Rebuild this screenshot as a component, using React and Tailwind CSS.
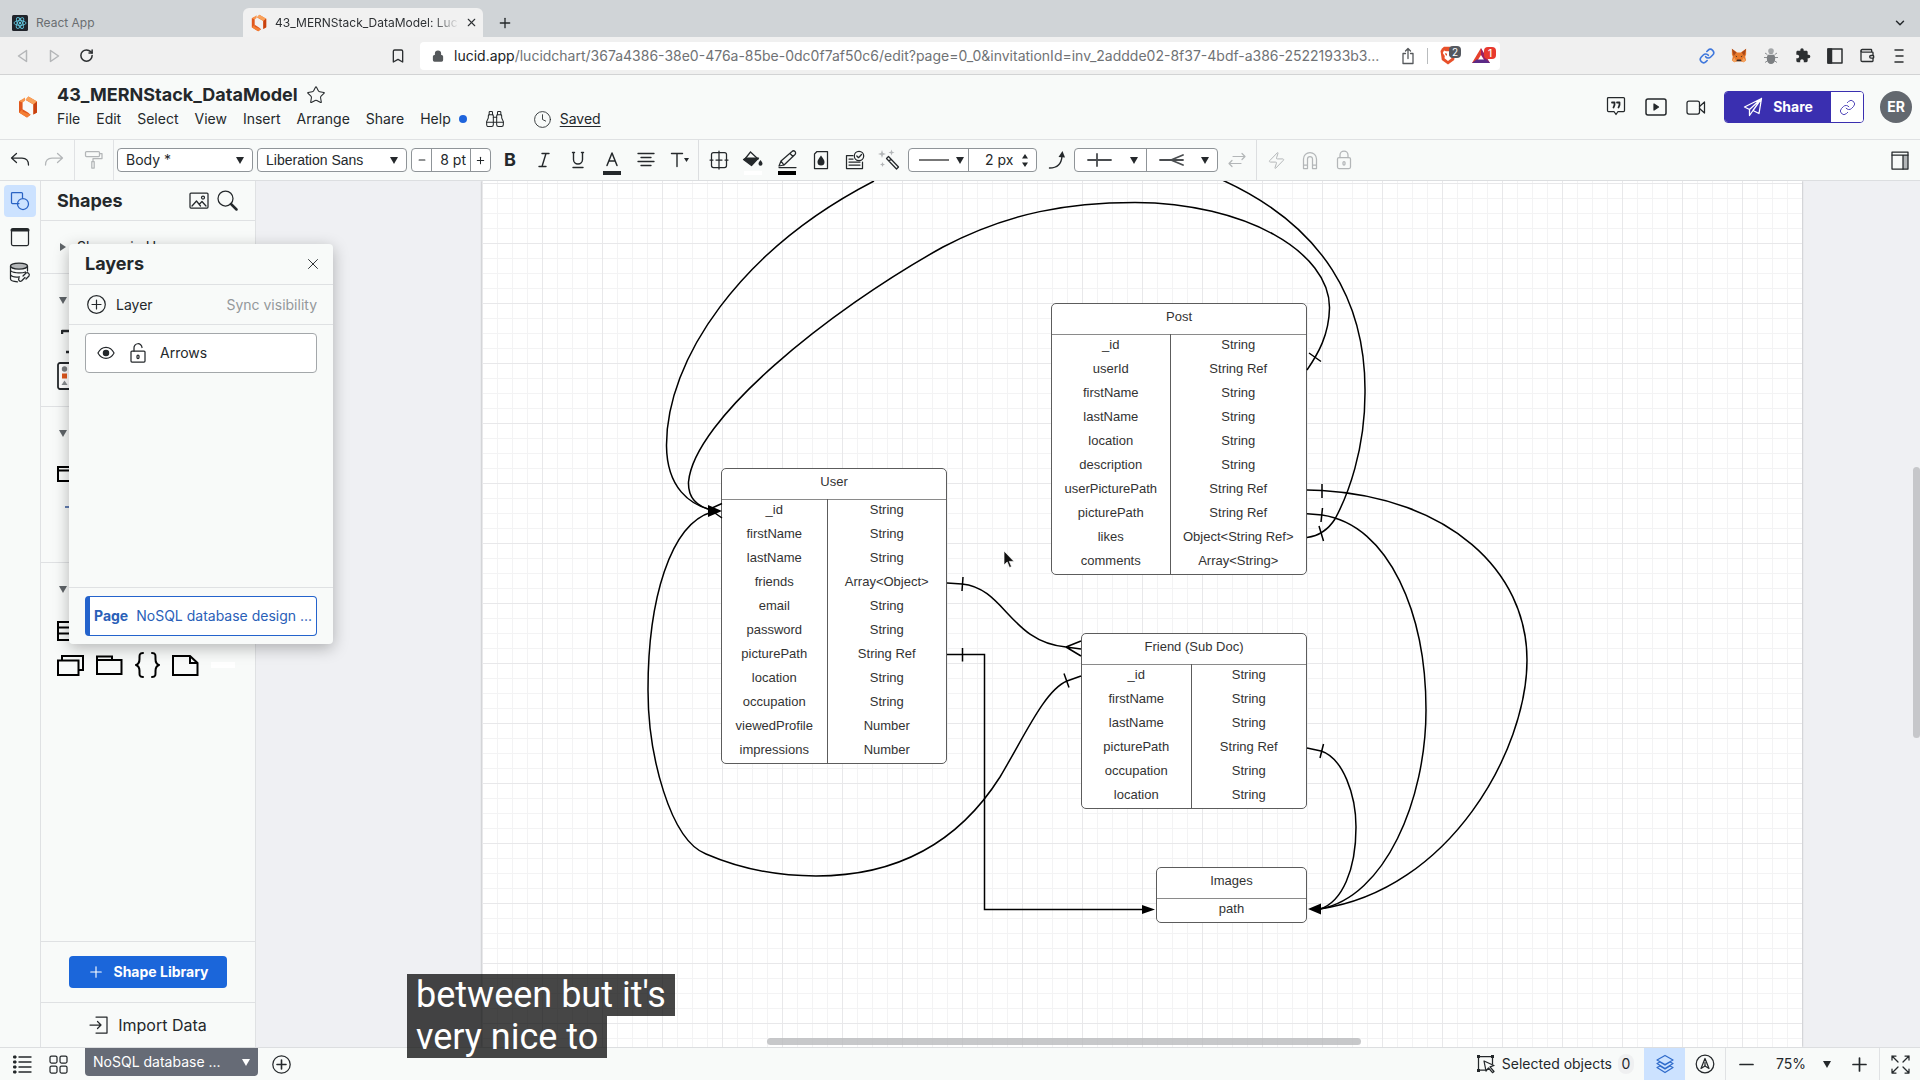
import React from "react";
import {
  Bookmark, RotateCw, Lock, Link, Bug, Wallet, ChevronDown, X, Plus,
  Star, Binoculars, Clock, Zap, Minus,
} from "lucide-react";
import { MdExtension } from "react-icons/md";

const INK = "#24282b";

function Svg({ w = 24, h = 24, box, className = "", children, sw = 1.25, fill = "none" }) {
  return (
    <svg width={w} height={h} viewBox={box || `0 0 ${w} ${h}`} fill={fill} stroke="currentColor" strokeWidth={sw} strokeLinecap="round" strokeLinejoin="round" className={className} aria-hidden="true">
      {children}
    </svg>
  );
}

function Caret({ className = "" }) {
  return (
    <svg width="8" height="7" viewBox="0 0 8 7" fill="currentColor" className={className} aria-hidden="true">
      <path d="M0 0h8L4 7z" />
    </svg>
  );
}

function LucidLogo({ w, h }) {
  return (
    <svg width={w} height={h} viewBox="0 0 20 22" aria-hidden="true">
      <path d="M1 5.2 4.6 3.4v9.8L10 16.6l2.6 2.2L9 21.4 1 16.4z" fill="#e0571d" />
      <path d="M1 5.2 7 1.4 7 4.8 4.6 6.6z" fill="#f7934b" />
      <path d="M10.4.6 19 5.6v10.8l-3.6 2V8.4L7.6 4z" fill="#ee6c26" />
      <path d="M10.4.6 19 5.6l-3.6 2.8L7.6 3.4z" fill="#f9a25b" />
      <path d="M4.6 13.2v2.4L12.6 18.8 9 21.4 1 16.4z" fill="#f47f35" />
      <path d="M15.4 8.4 19 5.6v10.8l-3.6 2z" fill="#c8410f" />
    </svg>
  );
}

function ReactLogo() {
  return (
    <svg width="16" height="16" viewBox="0 0 16 16" aria-hidden="true">
      <rect width="16" height="16" rx="1.5" fill="#20232a" />
      <g fill="none" stroke="#61c4dc" strokeWidth="0.9">
        <ellipse cx="8" cy="8" rx="6" ry="2.4" />
        <ellipse cx="8" cy="8" rx="6" ry="2.4" transform="rotate(60 8 8)" />
        <ellipse cx="8" cy="8" rx="6" ry="2.4" transform="rotate(120 8 8)" />
      </g>
      <circle cx="8" cy="8" r="1.2" fill="#61c4dc" />
    </svg>
  );
}

function TabStrip() {
  return (
    <div className="flex h-[37px] items-end bg-[#d0d4d7] pl-3 pr-3">
      <button className="flex h-[29px] w-[231px] items-center gap-2 text-xs text-[#6a6e71]">
        <ReactLogo />
        React App
      </button>
      <div className="flex h-[29px] w-[240px] items-center rounded-t-md bg-[#f1f1f1] pl-2 pr-1 text-[#2e3134]">
        <LucidLogo w={16} h={18} />
        <span className="ml-2 mr-1 flex-1 whitespace-nowrap text-xs [mask-image:linear-gradient(to_right,black_86%,transparent)]">
          43_MERNStack_DataModel: Luc
        </span>
        <button aria-label="Close tab" className="flex w-4 justify-center"><X size={13} strokeWidth={2} /></button>
      </div>
      <button aria-label="New tab" className="ml-[14px] flex h-[29px] w-4 items-center justify-center"><Plus size={16} strokeWidth={2} /></button>
      <button aria-label="Search tabs" className="ml-auto flex h-[29px] w-4 items-center justify-center"><ChevronDown size={14} strokeWidth={2.5} /></button>
    </div>
  );
}

function Fox() {
  return (
    <svg width="18" height="17" viewBox="0 0 18 17" aria-hidden="true">
      <path d="M1 1l6 4h4l6-4v6l-1 3 1 4-3 2-3-1H7l-3 1-3-2 1-4-1-3z" fill="#e8792b" />
      <path d="M1 1l5 4-3 4zM17 1l-5 4 3 4z" fill="#a8481a" />
      <path d="M7 13h4l1 2H6z" fill="#3a2a22" />
      <path d="M5 8.5l2 1-1 1zM13 8.5l-2 1 1 1z" fill="#3a2a22" />
      <path d="M1 14l3-3 2 4-2 1zM17 14l-3-3-2 4 2 1z" fill="#f3a25e" />
    </svg>
  );
}

function Beetle() {
  return (
    <svg width="14" height="18" viewBox="0 0 14 18" aria-hidden="true">
      <path d="M1 6l3 2M13 6l-3 2M0 10.500h4M14 10.500h-4M1 15.500l3-2M13 15.500l-3-2" stroke="#8b8e91" fill="none" />
      <ellipse cx="7" cy="11.500" rx="4.200" ry="5.500" fill="#7c7f82" />
      <circle cx="7" cy="4" r="2.800" fill="#a4a7a9" />
      <path d="M3 7.500h8" stroke="#d0d2d3" />
    </svg>
  );
}

function AddressBar() {
  return (
    <div className="flex h-[38px] items-center border-b border-[#d2d3d4] bg-[#f0f0f0] pr-[13px] text-[#2c2f31]">
      <div className="flex w-[420px] items-center">
        <button aria-label="Back" className="ml-4 flex w-3 justify-center text-[#b4b6b8]"><Svg w={11} h={14} sw={1.5}><path d="M9.500 1.500v11L1.500 7z" /></Svg></button>
        <button aria-label="Forward" className="ml-5 flex w-3 justify-center text-[#b4b6b8]"><Svg w={11} h={14} sw={1.5}><path d="M1.500 1.500v11l8-5.500z" /></Svg></button>
        <button aria-label="Reload" className="ml-[18px] flex w-4 justify-center"><RotateCw size={15} strokeWidth={2.400} /></button>
        <button aria-label="Bookmark" className="ml-auto mr-[14px] flex w-4 justify-center"><Bookmark size={16} strokeWidth={2} /></button>
      </div>
      <div className="flex h-7 min-w-0 flex-[0_1_1080px] items-center rounded bg-white pl-3">
        <Lock size={12} strokeWidth={2.500} fill="#55585b" className="text-[#55585b]" />
        <a href="#address" className="ml-[10px] flex-1 whitespace-nowrap text-sm text-[#6f7275]">
          <span className="text-[#202326]">lucid.app</span>/lucidchart/367a4386-38e0-476a-85be-0dc0f7af50c6/edit?page=0_0&amp;invitationId=inv_2addde02-8f37-4bdf-a386-25221933b3...
        </a>
        <button aria-label="Share page" className="ml-3 flex w-4 justify-center text-[#55585b]">
          <Svg w={14} h={18} sw={1.3}><path d="M4.500 6.500H2v10h10v-10H9.500M7 11.500V1.500M4.500 4 7 1.500 9.500 4" /></Svg>
        </button>
        <span className="mx-[11px] h-4 w-px bg-[#b9bcbe]" />
        <button aria-label="Shields" className="relative flex w-6 items-center">
          <svg width="18" height="19" viewBox="0 0 18 19" aria-hidden="true">
            <path d="M3 2.500 5 .8h8l2 1.700L16.500 5l-1.300 9L9 18.500 2.800 14 1.500 5z" fill="#e8502a" />
            <path d="M5 4.500l2 .8h4l2-.8 1.200 2.500-2 3 .3 2.200L9 15l-3.500-2.800.3-2.200-2-3z" fill="#fff" />
            <path d="M6 7l2 .8v2L6.500 9zM12 7l-2 .8v2l1.500-.8z" fill="#e8502a" />
          </svg>
          <span className="absolute left-2.5 top-0 flex h-3 w-3 items-center justify-center rounded bg-[#54585f] text-[10px] leading-none text-white">2</span>
        </button>
        <button aria-label="Rewards" className="relative ml-[9px] flex w-7 items-center">
          <svg width="18" height="17" viewBox="0 0 18 17" aria-hidden="true">
            <path d="M9 1 0 16h4l5-8z" fill="#e6402c" />
            <path d="M9 1l9 15h-4L9 8z" fill="#9a1f63" />
            <path d="M0 16h18l-4-3.500H4.500z" fill="#5b2a86" />
          </svg>
          <span className="absolute left-3 top-0 flex h-3 w-3 items-center justify-center rounded bg-[#e8392e] text-[10px] font-medium leading-none text-white">1</span>
        </button>
      </div>
      <div className="ml-auto flex items-center gap-4">
        <button aria-label="Copy link" className="flex w-4 justify-center text-[#3f77dc]"><Link size={16} strokeWidth={2.400} /></button>
        <button aria-label="Wallet extension" className="flex w-4 justify-center"><Fox /></button>
        <button aria-label="Debugger" className="flex w-4 justify-center"><Beetle /></button>
        <button aria-label="Extensions" className="flex w-4 justify-center"><MdExtension size={17} /></button>
        <button aria-label="Sidebar" className="flex w-4 justify-center"><Svg w={16} h={16} sw={1.500}><rect x="1" y="1" width="14" height="14" /><path d="M1 1h3.500v14H1z" fill="currentColor" /></Svg></button>
        <button aria-label="Wallet" className="flex w-4 justify-center"><Wallet size={17} strokeWidth={2} /></button>
        <button aria-label="Menu" className="flex w-4 justify-center"><Svg w={10} h={14} sw={1.500}><path d="M1 1h8M2 7h7M1 13h8" /></Svg></button>
      </div>
    </div>
  );
}

const menus = ["File", "Edit", "Select", "View", "Insert", "Arrange", "Share", "Help"];

function Header() {
  return (
    <header className="flex h-[65px] items-center border-b border-[#dfe1e3] bg-[#f8faf9] pb-0.5">
      <a href="#home" aria-label="Home" className="flex w-[57px] justify-center pr-px pt-0.5"><LucidLogo w={20} h={22} /></a>
      <div className="flex flex-col gap-0.5">
        <div className="flex items-center gap-2">
          <h1 className="text-lg font-bold leading-6">43_MERNStack_DataModel</h1>
          <button aria-label="Favorite"><Star size={20} strokeWidth={1.250} /></button>
        </div>
        <nav className="flex h-5 items-center gap-4 text-sm">
          {menus.map((m) => (
            <button key={m}>{m}</button>
          ))}
          <span className="-ml-2 h-2 w-2 rounded-full bg-[#1e64dc]" />
          <button aria-label="Find" className="ml-0.5 flex w-5 justify-center"><Binoculars size={20} strokeWidth={1.250} /></button>
          <button className="ml-3 flex items-center gap-2"><Clock size={19} strokeWidth={1.100} /><span className="underline underline-offset-2">Saved</span></button>
        </nav>
      </div>
      <div className="ml-auto flex items-center pr-2 pt-0.5">
        <button aria-label="Comments" className="flex w-10 justify-center">
          <Svg w={20} h={22}><path d="M2.500 1.500h15a1 1 0 0 1 1 1v12a1 1 0 0 1-1 1H12l-2 3-2-3H2.500a1 1 0 0 1-1-1v-12a1 1 0 0 1 1-1z" /><path d="M6 6.500h2.500v2.500L7.500 11.500M11 6.500h2.500v2.500l-1 2.500" strokeWidth="1.800" /></Svg>
        </button>
        <button aria-label="Present" className="flex w-10 justify-center">
          <Svg w={22} h={18}><rect x="1" y="1" width="20" height="16" rx="2" strokeWidth="1.500" /><path d="M9 6v6l4.500-3z" fill="currentColor" /></Svg>
        </button>
        <button aria-label="Video call" className="flex w-10 justify-center"><Svg w={20} h={15}><rect x="1" y="1" width="12.500" height="13" rx="2" /><path d="M13.500 6.500 18.500 2v11l-5-4.500" /></Svg></button>
        <div className="ml-2 flex h-8 overflow-hidden rounded border border-[#3a2fb0]">
          <button className="flex w-[106px] items-center justify-center gap-2.5 bg-[#3a2fb0] text-sm font-bold text-white">
            <Svg w={20} h={20} sw={1.3}><path d="M18.500 1.500 1.500 10l5 2.500zM18.500 1.500 16 16.500l-6-3zM6.500 12.500v6L10 13.500M18.500 1.500 10 13.500" /></Svg>
            Share
          </button>
          <button aria-label="Share link" className="flex w-8 items-center justify-center bg-white text-[#3a2fb0]"><Link size={17} strokeWidth={1.250} /></button>
        </div>
        <button className="ml-4 flex h-8 w-8 items-center justify-center rounded-full bg-[#63686f] text-sm font-bold text-white">ER</button>
      </div>
    </header>
  );
}

function Tool({ label, children, dim }) {
  return (
    <button aria-label={label} className={"flex h-10 w-[34px] shrink-0 items-center justify-center " + (dim ? "text-[#b3b6b8]" : "text-[#24282b]")}>
      {children}
    </button>
  );
}

function Pick({ label, value, className }) {
  return (
    <div className={"relative h-6 rounded border border-[#8f9498] bg-white " + className}>
      <select aria-label={label} className="block h-[22px] w-full appearance-none bg-transparent pl-2 text-sm leading-[22px] outline-none">
        <option>{value}</option>
      </select>
      <Caret className="pointer-events-none absolute right-2 top-2" />
    </div>
  );
}

function Toolbar() {
  return (
    <div className="flex h-[41px] items-center border-b border-[#dcdee0] bg-[#f8faf9]">
      <div className="flex h-full items-center border-r border-[#e0e2e4] px-[3px]">
        <Tool label="Undo"><Svg w={20} h={16}><path d="M6.500 1.500 1.500 6l5 4.500M1.500 6H12c4 0 6.500 2.500 6.500 7" /></Svg></Tool>
        <Tool label="Redo" dim><Svg w={20} h={16}><path d="m13.500 1.500 5 4.500-5 4.500M18.500 6H8c-4 0-6.500 2.500-6.500 7" /></Svg></Tool>
      </div>
      <div className="flex h-full items-center border-r border-[#e0e2e4] px-0.5">
        <Tool label="Format painter" dim><Svg w={20} h={20}><rect x="1.500" y="1.500" width="14" height="5" rx="1" /><path d="M15.500 3.500h2.500v5H9v3M7.800 11.500h2.400v6.500H7.800z" /></Svg></Tool>
      </div>
      <Pick label="Text style" value="Body *" className="ml-[3px] w-[136px]" />
      <Pick label="Font" value="Liberation Sans" className="ml-1 w-[150px] font-['Liberation_Sans',sans-serif]" />
      <div className="ml-1 mr-[2px] flex h-6 w-20 items-stretch overflow-hidden rounded border border-[#8f9498] bg-white">
        <button aria-label="Smaller text" className="flex w-5 items-center justify-center border-r border-[#8f9498]"><Minus size={10} strokeWidth={2.500} /></button>
        <input aria-label="Text size" defaultValue="8 pt" className="w-0 flex-1 bg-transparent pr-1 text-right text-sm outline-none" />
        <button aria-label="Larger text" className="flex w-5 items-center justify-center border-l border-[#8f9498]"><Plus size={11} strokeWidth={2.200} /></button>
      </div>
      <Tool label="Bold"><span className="text-lg font-bold leading-none">B</span></Tool>
      <Tool label="Italic"><Svg w={14} h={16} sw={1.400}><path d="M5 1.500h7M2 14.500h7M9 1.500l-4 13" /></Svg></Tool>
      <Tool label="Underline"><Svg w={14} h={18} sw={1.400}><path d="M2.500 1.500v7a4.500 4.500 0 0 0 9 0v-7M2 16.500h10M1.500 1.500h2M10.500 1.500h2" /></Svg></Tool>
      <Tool label="Text color"><Svg w={20} h={30} sw={1.500}><path d="M5 20.500 10 8l5 12.500M6.800 16h6.400" /><path d="M1 26h18v4H1z" fill="currentColor" stroke="none" /></Svg></Tool>
      <Tool label="Align"><Svg w={18} h={16} sw={1.300}><path d="M1 1.500h16M4 5.500h10M1 9.500h16M4 13.500h10" /></Svg></Tool>
      <Tool label="Text options"><Svg w={20} h={16} sw={1.400}><path d="M1.500 1.500h11M7 1.500v13" /><path d="M14 6h5l-2.500 4z" fill="currentColor" stroke="none" /></Svg></Tool>
      <div className="ml-px mr-[3px] h-full w-px bg-[#dcdee0]" />
      <Tool label="Container"><Svg w={20} h={20}><rect x="2.500" y="2.500" width="15" height="15" rx="2" /><path d="M10 1v18M1 10h3M16 10h3M7 10h6" /></Svg></Tool>
      <Tool label="Fill"><Svg w={22} h={30}><g transform="translate(0 2)"><path d="m8.500 5-6 7.500M8.500 5l7.500 7" /><path d="M1.500 12.500 4 11h12.500L9.500 18.500z" fill="currentColor" /><path d="M18.500 13c1.500 2 2 3 2 3.700a2 2 0 0 1-4 0c0-.7.500-1.700 2-3.700z" fill="currentColor" stroke="none" /></g><path d="M2 26h18v4H2z" fill="#fff" stroke="none" /></Svg></Tool>
      <Tool label="Line color"><Svg w={20} h={30}><path d="m2 17 2-5L15 2.500a2 2 0 0 1 3 3L7 16zM4 12l3 4M13 4.500l3 3M2 18.500h17" transform="translate(0 4)" /><path d="M1 26h18v4H1z" fill="#000" stroke="none" /></Svg></Tool>
      <Tool label="Opacity"><Svg w={16} h={20}><path d="M4 1.500h10.500v17h-13V4z" /><path d="M8 5.500c2.500 3.500 3.500 5 3.500 6.500a3.500 3.500 0 0 1-7 0c0-1.500 1-3 3.500-6.500z" fill="currentColor" stroke="none" /></Svg></Tool>
      <Tool label="Conditional formatting"><Svg w={20} h={20}><path d="M8 5.500H1.500v13h16V12" /><circle cx="14" cy="6" r="4.700" /><path d="m11.800 6 1.700 1.700L16.500 4.500M4 9h4M4 12h11M4 15h11" /></Svg></Tool>
      <Tool label="Magic styling"><Svg w={24} h={22}><path d="m9.500 9.500 2-2 10 10.500-2 2zM12 12l2-2" /><path d="M5 1 6 4 9 5 6 6 5 9 4 6 1 5 4 4zM14.500.5l.8 2.200 2.200.8-2.200.8-.8 2.200-.8-2.200-2.200-.8 2.200-.8zM5.500 13l.7 1.800 1.800.7-1.800.7-.7 1.800-.7-1.800-1.800-.7 1.800-.7z" fill="#b3b6b8" stroke="none" /></Svg></Tool>
      <div className="ml-[2px] mr-[3px] flex h-6 w-[129px] items-stretch rounded border border-[#8f9498] bg-white text-sm">
        <button aria-label="Line style" className="flex w-[60px] items-center justify-between border-r border-[#8f9498] pl-2.5 pr-1"><span className="h-0.5 w-[30px] bg-[#777]" /><Caret /></button>
        <div className="flex flex-1 items-center justify-between pl-4 pr-2">
          <span>2 px</span>
          <svg width="6" height="13" viewBox="0 0 6 13" fill={INK} aria-hidden="true"><path d="M0 4.500 3 0l3 4.500zM0 8.500h6L3 13z" /></svg>
        </div>
      </div>
      <Tool label="Curved line"><Svg w={18} h={20} sw={1.400}><path d="M1.500 18C9 18 13.500 14 14 6" /><path d="m10.500 7 4-6 2.500 6.500z" fill="currentColor" stroke="none" /></Svg></Tool>
      <div className="mr-[2px] flex h-6 w-36 items-stretch rounded border border-[#8f9498] bg-white">
        <button aria-label="Line start" className="flex flex-1 items-center justify-between border-r border-[#8f9498] pl-3 pr-2 text-[#4a4d50]"><Svg w={25} h={14} sw={1.800}><path d="M1 7h23M10 1v12" /></Svg><Caret className="text-[#24282b]" /></button>
        <button aria-label="Line end" className="flex flex-1 items-center justify-between pl-3 pr-2 text-[#4a4d50]"><Svg w={25} h={14} sw={1.800}><path d="M1 7h23M12 7l12-5M12 7l12 5" /></Svg><Caret className="text-[#24282b]" /></button>
      </div>
      <Tool label="Swap ends" dim><Svg w={18} h={16} sw={1.200}><path d="M5 4.500h12L14 1.500M17 4.500l-3 3M13 11.500H1l3-3M1 11.500l3 3" /></Svg></Tool>
      <div className="ml-[2px] mr-[2px] h-full w-px bg-[#dcdee0]" />
      <Tool label="Actions" dim><Zap size={19} strokeWidth={1.250} /></Tool>
      <Tool label="Snap" dim><Svg w={16} h={19}><path d="M1.500 17.500V8a6.500 6.500 0 0 1 13 0v9.500h-4V8a2.500 2.500 0 0 0-5 0v9.500zM1.500 14h4M10.500 14h4" /></Svg></Tool>
      <Tool label="Lock" dim><Svg w={16} h={20}><rect x="1.500" y="7.500" width="13" height="11" rx="1.500" /><path d="M4 7.500V5a4 4 0 0 1 8 0v2.500" /><rect x="7" y="11.500" width="2" height="3.500" rx="1" /></Svg></Tool>
      <div className="ml-auto pr-[3px]">
        <Tool label="Toggle side panel"><Svg w={18} h={19}><rect x="12" y="4" width="5" height="14" fill="#b3b6b8" stroke="none" /><rect x="1" y="1" width="16" height="17" /><path d="M1 4h16M12 4v14" /></Svg></Tool>
      </div>
    </div>
  );
}

function Rail() {
  return (
    <div className="flex w-[41px] shrink-0 flex-col items-center gap-1 border-r border-[#dfe1e3] bg-[#f8faf9] pt-1">
      <button aria-label="Shapes" className="flex h-8 w-8 items-center justify-center rounded bg-[#cce2ff] text-[#2a63c4]">
        <Svg w={20} h={20}><path d="M9 12.500H2.500a1 1 0 0 1-1-1v-9a1 1 0 0 1 1-1h9a1 1 0 0 1 1 1V7" /><circle cx="13" cy="13" r="5.500" /></Svg>
      </button>
      <button aria-label="Containers" className="flex h-8 w-8 items-center justify-center"><Svg w={20} h={20}><rect x="1.500" y="1.500" width="17" height="17" rx="1.500" /><path d="M2 3h16" strokeWidth="3" /></Svg></button>
      <button aria-label="Linked data" className="flex h-8 w-8 items-center justify-center">
        <Svg w={22} h={22}><ellipse cx="10" cy="4" rx="8.500" ry="3" fill="#b3b6b8" /><path d="M1.500 4v13c0 1.500 3 2.500 7 2.800M18.500 4v5M1.500 8.500c1 2 10 3.500 15 1.500M1.500 12.800c1 1.500 5 2.500 9 2M14 14l3-3a2.200 2.200 0 0 1 3 3l-3 3M16 15.500l-3.500 3.500a2 2 0 0 1-2.500-3" /></Svg>
      </button>
    </div>
  );
}

function Fold({ open = true }) {
  return (
    <button aria-label="Toggle section" className="flex h-4 w-3 items-center text-[#5f6468]">
      {open ? <Caret /> : <svg width="7" height="8" viewBox="0 0 7 8" fill="currentColor" aria-hidden="true"><path d="M1 0v8l6-4z" /></svg>}
    </button>
  );
}

function ShapesPanel() {
  return (
    <aside className="flex w-[215px] shrink-0 flex-col border-r border-[#dfe1e3] bg-[#f8faf9]">
      <div className="flex h-10 items-center border-b border-[#dfe1e3] px-4">
        <h2 className="flex-1 text-lg font-bold">Shapes</h2>
        <button aria-label="Search images" className="mr-2"><Svg w={20} h={17}><rect x="1" y="1" width="18" height="15" rx="1" /><circle cx="14" cy="5.500" r="1.500" /><path d="m3 14 4.500-5 4 5M10.500 12l2.500-2.500 4 4.500" /></Svg></button>
        <button aria-label="Search shapes" className="mr-px"><Svg w={21} h={21}><circle cx="8.500" cy="8.500" r="7.500" /><path d="m14 14 5.500 5.500" strokeWidth="2.500" /></Svg></button>
      </div>
      <section className="flex h-[53px] items-center gap-1.5 border-b border-[#dfe1e3] pl-[18px] text-sm"><Fold open={false} />Shapes in Use</section>
      <section className="flex h-[133px] flex-col border-b border-[#dfe1e3] pl-4 pt-[18px]">
        <div className="pl-0.5"><Fold /></div>
        <div className="mt-5 flex pl-1"><Svg w={22} h={26} sw={2.500}><path d="M1 6V3h19v3M10.500 3v21M5 24h11" strokeLinecap="butt" /></Svg></div>
        <div className="mt-2 flex"><Svg w={30} h={28} sw={1.800}><rect x="1" y="1" width="28" height="26" rx="2" fill="#fff" /><circle cx="7.500" cy="7" r="2.700" fill="#777b7e" stroke="none" /><path d="M5 11.500h5v5H5z" fill="#e0571d" stroke="none" /><path d="m7.500 18.500 3 4.500h-6z" fill="#8a8e91" stroke="none" /></Svg></div>
      </section>
      <section className="flex h-[156px] flex-col border-b border-[#dfe1e3] pl-4 pt-[18px]">
        <div className="pl-0.5"><Fold /></div>
        <div className="mt-[25px] flex text-black"><Svg w={26} h={16} sw={2}><path d="M1 1h24v14H1zM1 4.500h24" strokeLinejoin="miter" /></Svg></div>
        <div className="mt-6 flex pl-2 text-[#31549a]"><Svg w={18} h={2} sw={1.500}><path d="M0 1h18" /></Svg></div>
      </section>
      <section className="flex flex-1 flex-col pl-4 pt-[18px] text-black">
        <div className="pl-0.5"><Fold /></div>
        <div className="mt-6 flex"><Svg w={26} h={20} sw={2}><path d="M1 1h24v18H1zM1 6.500h24M1 12.500h24" strokeLinejoin="miter" /></Svg></div>
        <div className="mt-2.5 flex h-7 items-center gap-3">
          <Svg w={27} h={21} sw={2}><path d="M5 4.500V1h21v14h-4M1 5.500h20.500V20H1z" strokeLinejoin="miter" /></Svg>
          <Svg w={27} h={20} sw={2}><path d="M1 19V1.500h15V5h9.500v14zM1 5h15" strokeLinejoin="miter" /></Svg>
          <Svg w={25} h={26} sw={2}><path d="M8 1C4 1 4.500 3.500 4.500 7S4 12 1 13c3 1 3.500 2.500 3.500 6S4 25 8 25M17 1c4 0 3.500 2.500 3.500 6s.500 5 3.500 6c-3 1-3.500 2.500-3.500 6s.500 6-3.500 6" /></Svg>
          <Svg w={27} h={21} sw={2}><path d="M1 1h17l7.500 7v12H1zM18 1v7h7.500" strokeLinejoin="miter" /></Svg>
          <span className="h-1.5 w-6 bg-white" />
        </div>
      </section>
      <div className="flex h-[61px] items-center justify-center border-t border-[#dfe1e3]">
        <button className="flex h-8 w-[158px] items-center justify-center gap-2 rounded bg-[#1b66da] text-sm font-bold text-white"><Plus size={18} strokeWidth={1.500} />Shape Library</button>
      </div>
      <button className="flex h-[45px] items-center justify-center gap-2.5 border-t border-[#dfe1e3] text-base">
        <Svg w={19} h={18}><path d="M7 1h11v16H7M1 9h11M8.500 5.500 12 9l-3.500 3.500" /></Svg>Import Data
      </button>
    </aside>
  );
}

function LayersPanel() {
  return (
    <aside className="absolute left-[69px] top-[63px] z-10 flex h-[400px] w-[264px] flex-col rounded bg-[#f8faf9] shadow-[0_4px_16px_rgba(0,0,0,0.28)]">
      <div className="flex h-[41px] items-center justify-between border-b border-[#dfe1e3] pl-4 pr-[11px]">
        <h2 className="text-lg font-bold">Layers</h2>
        <button aria-label="Close layers"><X size={18} strokeWidth={1.250} /></button>
      </div>
      <div className="flex h-10 items-center justify-between border-b border-[#dfe1e3] px-4 text-sm">
        <button className="flex items-center gap-2.5 pl-0.5"><Svg w={19} h={19} sw={1.200}><circle cx="9.500" cy="9.500" r="8.800" /><path d="M5 9.500h9M9.500 5v9" /></Svg>Layer</button>
        <button className="text-[#94989b]">Sync visibility</button>
      </div>
      <div className="flex-1 px-4 pt-2">
        <div className="flex h-10 items-center rounded border border-[#a3a7aa] bg-white pl-[11px] text-sm">
          <button aria-label="Hide layer" className="flex w-[18px] justify-center"><Svg w={19} h={14}><path d="M1 7c4-8 13-8 17 0-4 7.500-13 7.500-17 0z" /><circle cx="9.500" cy="7" r="2.800" fill="currentColor" /></Svg></button>
          <button aria-label="Lock layer" className="ml-[15px] mr-3.5 flex w-4 justify-center"><Svg w={16} h={20}><rect x="1" y="8" width="14" height="11" rx="1" /><path d="M4 8V5a4 4 0 0 1 8-.5" /><rect x="7" y="12" width="2" height="3.500" rx="1" /></Svg></button>
          Arrows
        </div>
      </div>
      <div className="border-t border-[#dfe1e3] px-4 py-2">
        <button className="flex h-10 w-full items-center gap-2 overflow-hidden whitespace-nowrap rounded border border-l-[5px] border-[#2463cc] bg-white pl-1 text-sm text-[#2a60b8]">
          <span className="font-bold">Page</span>NoSQL database design ...
        </button>
      </div>
    </aside>
  );
}

const entities = [
  { name: "User", box: "left-[239px] top-[287px] w-[226px]", col: "w-[105px]", rows: [["_id", "String"], ["firstName", "String"], ["lastName", "String"], ["friends", "Array<Object>"], ["email", "String"], ["password", "String"], ["picturePath", "String Ref"], ["location", "String"], ["occupation", "String"], ["viewedProfile", "Number"], ["impressions", "Number"]] },
  { name: "Post", box: "left-[569px] top-[122px] w-[256px]", col: "w-[118px]", rows: [["_id", "String"], ["userId", "String Ref"], ["firstName", "String"], ["lastName", "String"], ["location", "String"], ["description", "String"], ["userPicturePath", "String Ref"], ["picturePath", "String Ref"], ["likes", "Object<String Ref>"], ["comments", "Array<String>"]] },
  { name: "Friend (Sub Doc)", box: "left-[599px] top-[452px] w-[226px]", col: "w-[109px]", rows: [["_id", "String"], ["firstName", "String"], ["lastName", "String"], ["picturePath", "String Ref"], ["occupation", "String"], ["location", "String"]] },
  { name: "Images", box: "left-[674px] top-[686px] w-[151px]", col: "", rows: [["path"]] },
];

function Entity({ e }) {
  return (
    <div className={"absolute overflow-hidden rounded-[5px] border border-[#5c5c5c] bg-white " + e.box}>
      <table className="w-full table-fixed border-collapse text-center font-['Liberation_Sans',sans-serif] text-[13px] leading-none text-[#333]">
        <colgroup>
          <col className={e.col} />
          {e.rows[0].length > 1 && <col />}
        </colgroup>
        <thead>
          <tr className="h-[30px] border-b border-[#8a8a8a]">
            <th colSpan={e.rows[0].length} className="p-0 pb-1 font-normal">{e.name}</th>
          </tr>
        </thead>
        <tbody>
          {e.rows.map(([k, v]) => (
            <tr key={k} className="h-6">
              <td className={"p-0 pb-1 " + (v ? "border-r border-[#5c5c5c]" : "")}>{k}</td>
              {v && <td className="p-0 pb-1">{v}</td>}
            </tr>
          ))}
        </tbody>
      </table>
    </div>
  );
}

function Connectors() {
  return (
    <svg className="absolute left-0 top-0" width="1320" height="866" viewBox="482 181 1320 866" fill="none" stroke="#000" strokeWidth="1.500" aria-hidden="true">
      <path d="M874 181C740 250 666 360 666.500 446C667 488 690 505 712 510" />
      <path d="M1220 179C1325 226 1366 303 1365 393C1365 450 1348 495 1335 519C1328 530 1318 536 1307 537.500" />
      <path d="M712 510C695 506 688 496 688.500 482C694 420 826 312 943 247C1010 212 1070 202.500 1135 202.500C1245 203 1330 252 1329.500 308C1329 335 1318 354 1307 370" />
      <path d="M712 512C670 524 648 600 648 690C648 755 670 840 706 854C743 870 780 876 816 876C900 876 960 840 1000 777C1025 735 1045 690 1067 681L1081 676" />
      <path d="M947 583L962 584C1005 588 1010 642 1066 647L1081 649M1066 647L1081 641M1066 647L1081 656" />
      <path d="M947 654.500H984.500V909.500H1143" />
      <path d="M1307 490L1322 490.500C1448 498 1527 570 1527 660C1527 750 1450 890 1320 909" />
      <path d="M1307 513.700L1322 515C1390 525 1426 615 1426 710C1426 800 1385 897 1320 909" />
      <path d="M1307 748L1321 751C1343 758 1356 795 1356 827C1356 870 1342 902 1320 909" />
      <path d="M963 577L962 591M962.500 648V661.500M1322 484V498M1322.500 508L1321 522M1319 526L1323.500 541M1309 353L1321 361.500M1323.500 744L1320 758M1064 673.500L1069 687.500" />
      <path d="M712 508L722 503.500M712 511L722 518" />
      <path d="M722 511L708 505V517zM1155 909.500L1142 905V914zM1308 909L1321 903.500V914.500z" fill="#000" stroke="none" />
    </svg>
  );
}

function Canvas() {
  return (
    <main className="relative min-w-0 flex-1 overflow-hidden bg-[#eff0f3]">
      <div className="relative ml-[226px] h-full w-[1320px] overflow-hidden bg-white shadow-[0_0_2px_rgba(0,0,0,0.35)]">
        <svg className="absolute inset-0 h-full w-full" aria-hidden="true">
          <defs>
            <pattern id="grid" width="60" height="60" patternUnits="userSpaceOnUse" y="2">
              <path d="M15.500 0v60M30.500 0v60M45.500 0v60M0 15.500h60M0 30.500h60M0 45.500h60" stroke="#f3f3f4" />
              <path d="M.5 0v60M0 .5h60" stroke="#e8e8ea" />
            </pattern>
          </defs>
          <rect width="100%" height="100%" fill="url(#grid)" />
        </svg>
        {entities.map((e) => (
          <Entity key={e.name} e={e} />
        ))}
        <Connectors />
        <svg className="absolute left-[521px] top-[369px]" width="14" height="20" viewBox="0 0 14 20" aria-hidden="true">
          <path d="M1 1v14l3.200-3L6.500 17.500l2-.9-2.200-5.200H11z" fill="#111" stroke="#fff" strokeWidth="0.700" />
        </svg>
      </div>
      <div className="absolute bottom-0.5 left-[511px] h-[7px] w-[594px] rounded bg-[#b9babd]/80" />
      <div className="absolute right-0 top-[286px] h-[271px] w-[7px] rounded bg-[#c6c7ca]" />
    </main>
  );
}

function StatusBar() {
  return (
    <footer className="flex h-[33px] shrink-0 items-center border-t border-[#dcdee0] bg-[#f8faf9] text-sm">
      <button aria-label="Page list" className="ml-3 flex w-5 justify-center"><Svg w={19} h={19} sw={1.400}><path d="M6 2h12M6 7h12M6 12h12M6 17h12" /><path d="M1 1h2v2H1zM1 6h2v2H1zM1 11h2v2H1zM1 16h2v2H1z" fill="currentColor" stroke="currentColor" strokeWidth="1" /></Svg></button>
      <button aria-label="Page grid" className="ml-4 flex w-5 justify-center"><Svg w={19} h={19}><rect x="1" y="1" width="7" height="7" rx="1.500" /><rect x="11" y="1" width="7" height="7" rx="1.500" /><rect x="1" y="11" width="7" height="7" rx="1.500" /><rect x="11" y="11" width="7" height="7" rx="1.500" /></Svg></button>
      <button className="ml-[17px] flex h-7 w-[173px] items-center justify-between self-start rounded-b bg-[#666b76] px-2 text-white">NoSQL database ...<Caret /></button>
      <button aria-label="Add page" className="ml-[14px] flex"><Svg w={19} h={19}><circle cx="9.500" cy="9.500" r="8.700" /><path d="M5 9.500h9M9.500 5v9" strokeWidth="1.600" /></Svg></button>
      <div className="ml-auto flex h-full items-center">
        <Svg w={20} h={20}><path d="M10 16H2.500V2.500h14V10" /><path d="M1 1h3v3H1zM15 1h3v3h-3zM1 15h3v3H1z" fill="currentColor" stroke="none" /><path d="m8 7 10 4.500-4 1.300 4 4.700-1.500 1.200-4-4.700L10 17z" fill="#f8faf9" /></Svg>
        <span className="ml-1.5">Selected objects</span>
        <span className="ml-1.5 mr-2.5 flex h-5 w-4 items-center justify-center rounded-full bg-[#eff0f1]">0</span>
        <button aria-label="Layers" className="flex h-full w-[41px] items-center justify-center bg-[#cce2ff] text-[#2f6bcb]"><Svg w={20} h={20}><path d="m10 1.500 8 4.500-8 4.500L2 6zM2 9.500l3-1.500 5 3 5-3 3 1.500-8 5zM2 13.500 5 12l5 3 5-3 3 1.500-8 5z" /></Svg></button>
        <button aria-label="Accessibility" className="flex h-full w-[41px] items-center justify-center border-r border-[#e0e2e4]"><Svg w={20} h={20}><circle cx="10" cy="10" r="8.800" /><path d="M6 14.500 10 4.500l4 10-4-2.500z" /><path d="M10 8.500v3.500" /></Svg></button>
        <button aria-label="Zoom out" className="flex w-10 justify-center"><Svg w={15} h={15} sw={1.700}><path d="M1 7.500h13" /></Svg></button>
        <button className="flex w-[73px] items-center justify-between pl-2.5 pr-2">75%<Caret /></button>
        <button aria-label="Zoom in" className="flex h-full w-[41px] items-center justify-center border-r border-[#e0e2e4]"><Svg w={15} h={15} sw={1.700}><path d="M1 7.500h13M7.500 1v13" /></Svg></button>
        <button aria-label="Full screen" className="flex w-10 justify-center"><Svg w={19} h={19}><path d="M1 5V1h4M1 1l6 6M14 1h4v4M18 1l-6 6M1 14v4h4M1 18l6-6M18 14v4h-4M18 18l-6-6" /></Svg></button>
      </div>
    </footer>
  );
}

export default function App() {
  return (
    <div className="relative flex h-screen flex-col overflow-hidden font-[Inter,sans-serif] text-[#24282b]">
      <TabStrip />
      <AddressBar />
      <Header />
      <Toolbar />
      <div className="relative flex min-h-0 flex-1">
        <Rail />
        <ShapesPanel />
        <Canvas />
        <LayersPanel />
      </div>
      <StatusBar />
      <p className="absolute bottom-[22px] left-[407px] z-20 flex flex-col items-start font-[Roboto,sans-serif] text-[36px] leading-[42px] text-white">
        <span className="bg-[#080808]/75 px-[9px]">between but it&apos;s</span>
        <span className="bg-[#080808]/75 px-[9px]">very nice to</span>
      </p>
    </div>
  );
}
